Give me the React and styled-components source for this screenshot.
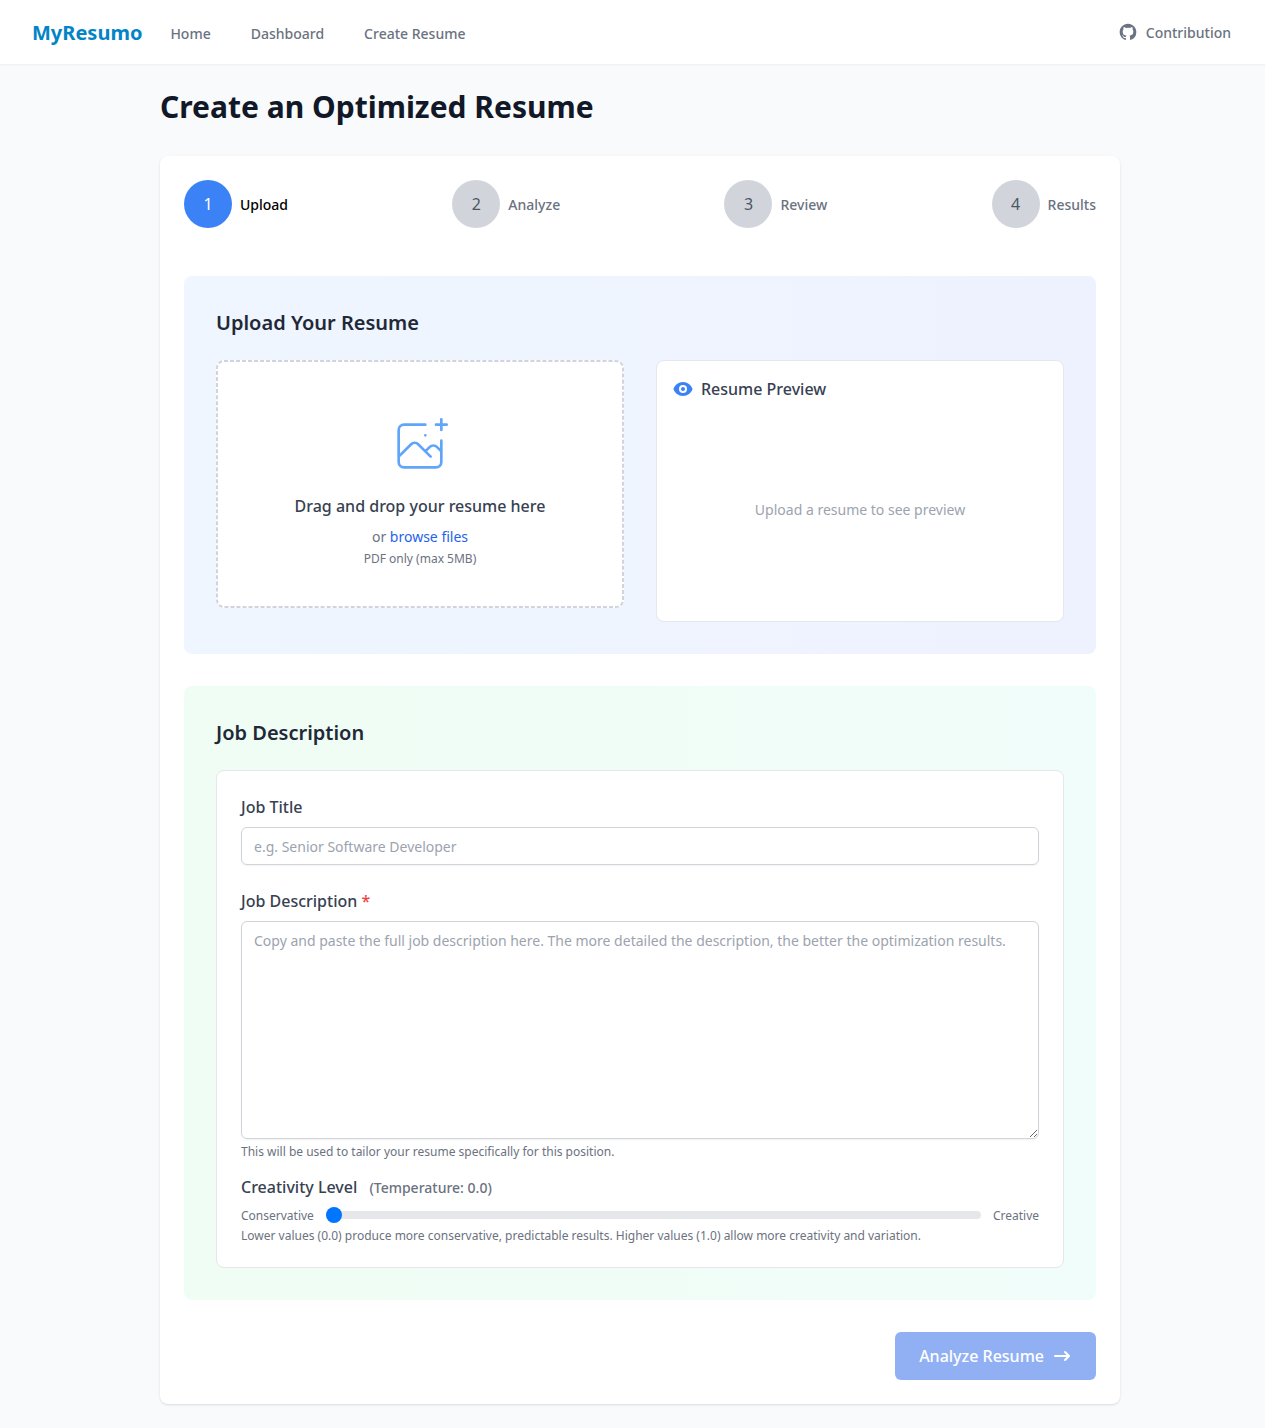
import React, { useState } from "react";
import styled, { createGlobalStyle } from "styled-components";

const fontStack = `"Noto Sans", sans-serif`;

const Global = createGlobalStyle`
  *, *::before, *::after { box-sizing: border-box; }
  html { background: #f9fafb; }
  body {
    margin: 0;
    overflow: hidden;
    background: #f9fafb;
    font-family: ${fontStack};
    font-size: 16px;
    line-height: 24px;
    color: #000;
  }
  h1, h2, h3, p { margin: 0; }
  svg { display: block; flex-shrink: 0; }
`;

const Page = styled.div`
  width: 1280px;
  min-height: 1428px;
  background: #f9fafb;
`;

const Nav = styled.nav`
  display: flex;
  justify-content: space-between;
  height: 64px;
  padding: 0 49px 0 32px;
  background: #fff;
  box-shadow: 0 1px 2px 0 rgba(0, 0, 0, 0.05);
`;

const NavGroup = styled.div`
  display: flex;
  align-items: center;
`;

const Brand = styled.a`
  margin-right: 28px;
  padding-top: 2px;
  font-size: 20px;
  line-height: 28px;
  font-weight: 700;
  color: #0284c7;
`;

const NavLinks = styled.div`
  display: flex;
  gap: 40px;
  padding-top: 3px;
`;

const NavLink = styled.a`
  display: flex;
  align-items: center;
  gap: 8px;
  font-size: 14px;
  line-height: 20px;
  font-weight: 500;
  color: #6b7280;
`;

const NavLinkText = styled.span`
  padding-top: 2px;
`;

const Main = styled.main`
  width: 960px;
  margin: 0 auto;
  padding: 25px 0 24px;
`;

const Title = styled.h1`
  margin-bottom: 31px;
  font-size: 30px;
  line-height: 36px;
  font-weight: 700;
  color: #111827;
`;

const Card = styled.div`
  padding: 24px;
  border-radius: 8px;
  background: #fff;
  box-shadow: 0 1px 3px 0 rgba(0, 0, 0, 0.1), 0 1px 2px -1px rgba(0, 0, 0, 0.1);
`;

const Steps = styled.div`
  display: flex;
  justify-content: space-between;
  margin-bottom: 48px;
`;

const Step = styled.div`
  display: flex;
  align-items: center;
  gap: 8px;
`;

const StepCircle = styled.div`
  display: flex;
  align-items: center;
  justify-content: center;
  width: 48px;
  height: 48px;
  border-radius: 50%;
  background: ${(p) => (p.$active ? "#3b82f6" : "#d1d5db")};
  color: ${(p) => (p.$active ? "#fff" : "#4b5563")};
`;

const StepLabel = styled.span`
  padding-top: 2px;
  font-size: 14px;
  line-height: 20px;
  font-weight: 500;
  color: ${(p) => (p.$active ? "#000" : "#6b7280")};
`;

const Section = styled.section`
  margin-bottom: 32px;
  padding: 32px;
  border-radius: 8px;
  background: linear-gradient(to right, ${(p) => p.$from}, ${(p) => p.$to});
`;

const SectionTitle = styled.h2`
  margin-bottom: 23px;
  padding-top: 1px;
  font-size: 20px;
  line-height: 28px;
  font-weight: 600;
  color: #1f2937;
`;

const Columns = styled.div`
  display: grid;
  grid-template-columns: 1fr 1fr;
  align-items: start;
  gap: 32px;
`;

const DropZone = styled.div`
  position: relative;
  display: flex;
  flex-direction: column;
  align-items: center;
  height: 248px;
  padding: 54px 34px 0;
  border-radius: 8px;
  background: #fff;
`;

const DashedOutline = styled.svg`
  position: absolute;
  inset: 0;
  width: 100%;
  height: 100%;
  pointer-events: none;
`;

const DropTitle = styled.p`
  margin: 16px 0 9px;
  font-weight: 500;
  color: #374151;
`;

const DropText = styled.p`
  margin-bottom: -1px;
  font-size: 14px;
  line-height: 20px;
  color: #6b7280;
`;

const Browse = styled.span`
  color: #2563eb;
`;

const Hint = styled.p`
  margin: 5px 0 -1px;
  font-size: 12px;
  line-height: 16px;
  color: #6b7280;
`;

const Preview = styled.div`
  padding: 16px;
  border: 1px solid #e5e7eb;
  border-radius: 8px;
  background: #fff;
`;

const PreviewTitle = styled.h3`
  display: flex;
  align-items: center;
  gap: 8px;
  margin-bottom: 12px;
  font-size: 16px;
  font-weight: 500;
  color: #374151;
`;

const PreviewBody = styled.div`
  display: flex;
  align-items: center;
  justify-content: center;
  height: 192px;
  padding-top: 2px;
  font-size: 14px;
  line-height: 20px;
  color: #9ca3af;
`;

const FormCard = styled.div`
  padding: 24px;
  border: 1px solid #e5e7eb;
  border-radius: 8px;
  background: #fff;
`;

const Field = styled.div`
  display: flex;
  flex-direction: column;
  margin-bottom: ${(p) => p.$gap || 0}px;
`;

const Label = styled.label`
  display: block;
  margin-bottom: 8px;
  font-weight: 500;
  color: #374151;
`;

const Required = styled.span`
  color: #ef4444;
`;

const Temperature = styled.span`
  margin-left: 8px;
  font-size: 14px;
  line-height: 20px;
  color: #6b7280;
`;

const Input = styled.input`
  display: block;
  width: 100%;
  height: 38px;
  padding: 8px 12px;
  border: 1px solid #d1d5db;
  border-radius: 6px;
  background: #fff;
  box-shadow: 0 1px 2px 0 rgba(0, 0, 0, 0.05);
  font: 14px/20px ${fontStack};
  color: #111827;

  &::placeholder {
    color: #9ca3af;
    opacity: 1;
  }
`;

const TextArea = styled(Input).attrs({ as: "textarea" })`
  height: 218px;
  padding-top: 9px;
`;

const SliderRow = styled.div`
  display: flex;
  align-items: center;
  gap: 12px;
  height: 16px;
`;

const SliderLabel = styled.span`
  padding-top: 2px;
  font-size: 12px;
  line-height: 16px;
  color: #6b7280;
`;

const Slider = styled.input`
  flex: 1;
  min-width: 0;
  height: 8px;
  margin: 0;
  appearance: none;
  border-radius: 8px;
  background: #e5e7eb;

  &::-webkit-slider-thumb {
    appearance: none;
    width: 16px;
    height: 16px;
    border-radius: 50%;
    background: #0075ff;
  }
`;

const Actions = styled.div`
  display: flex;
  justify-content: flex-end;
`;

const SubmitButton = styled.button`
  display: flex;
  align-items: center;
  gap: 8px;
  padding: 12px 24px;
  border: 0;
  border-radius: 6px;
  background: #2563eb;
  font: 500 16px/24px ${fontStack};
  color: #fff;
  opacity: 0.5;
`;

const GithubIcon = () => (
  <svg width="20" height="20" viewBox="0 0 24 24" fill="currentColor">
    <path
      fillRule="evenodd"
      clipRule="evenodd"
      d="M12 2C6.477 2 2 6.484 2 12.017c0 4.425 2.865 8.18 6.839 9.504.5.092.682-.217.682-.483 0-.237-.008-.868-.013-1.703-2.782.605-3.369-1.343-3.369-1.343-.454-1.158-1.11-1.466-1.11-1.466-.908-.62.069-.608.069-.608 1.003.07 1.531 1.032 1.531 1.032.892 1.53 2.341 1.088 2.91.832.092-.647.35-1.088.636-1.338-2.22-.253-4.555-1.113-4.555-4.951 0-1.093.39-1.988 1.029-2.688-.103-.253-.446-1.272.098-2.65 0 0 .84-.27 2.75 1.026A9.564 9.564 0 0112 6.844c.85.004 1.705.115 2.504.337 1.909-1.296 2.747-1.027 2.747-1.027.546 1.379.202 2.398.1 2.651.64.7 1.028 1.595 1.028 2.688 0 3.848-2.339 4.695-4.566 4.943.359.309.678.92.678 1.855 0 1.338-.012 2.419-.012 2.747 0 .268.18.58.688.482A10.019 10.019 0 0022 12.017C22 6.484 17.522 2 12 2z"
    />
  </svg>
);

const UploadIcon = () => (
  <svg width="64" height="64" viewBox="0 0 48 48" fill="none" stroke="#60a5fa" strokeWidth="2" strokeLinecap="round" strokeLinejoin="round">
    <path d="M28 8H12a4 4 0 00-4 4v20m32-12v8m0 0v8a4 4 0 01-4 4H12a4 4 0 01-4-4v-4m32-4l-3.172-3.172a4 4 0 00-5.656 0L28 28M8 32l9.172-9.172a4 4 0 015.656 0L28 28m0 0l4 4m4-24h8m-4-4v8m-12 4h.02" />
  </svg>
);

const EyeIcon = () => (
  <svg width="20" height="20" viewBox="0 0 20 20" fill="#3b82f6">
    <path d="M10 12a2 2 0 100-4 2 2 0 000 4z" />
    <path
      fillRule="evenodd"
      clipRule="evenodd"
      d="M.458 10C1.732 5.943 5.522 3 10 3s8.268 2.943 9.542 7c-1.274 4.057-5.064 7-9.542 7S1.732 14.057.458 10zM14 10a4 4 0 11-8 0 4 4 0 018 0z"
    />
  </svg>
);

const ArrowIcon = () => (
  <svg width="20" height="20" viewBox="0 0 20 20" fill="currentColor">
    <path
      fillRule="evenodd"
      clipRule="evenodd"
      d="M12.293 5.293a1 1 0 011.414 0l4 4a1 1 0 010 1.414l-4 4a1 1 0 01-1.414-1.414L14.586 11H3a1 1 0 110-2h11.586l-2.293-2.293a1 1 0 010-1.414z"
    />
  </svg>
);

const steps = ["Upload", "Analyze", "Review", "Results"];

export default function App() {
  const [temperature, setTemperature] = useState(0);

  return (
    <Page>
      <Global />
      <Nav>
        <NavGroup>
          <Brand>MyResumo</Brand>
          <NavLinks>
            <NavLink>Home</NavLink>
            <NavLink>Dashboard</NavLink>
            <NavLink>Create Resume</NavLink>
          </NavLinks>
        </NavGroup>
        <NavGroup>
          <NavLink>
            <GithubIcon />
            <NavLinkText>Contribution</NavLinkText>
          </NavLink>
        </NavGroup>
      </Nav>

      <Main>
        <Title>Create an Optimized Resume</Title>
        <Card>
          <Steps>
            {steps.map((name, i) => (
              <Step key={name}>
                <StepCircle $active={i === 0}>{i + 1}</StepCircle>
                <StepLabel $active={i === 0}>{name}</StepLabel>
              </Step>
            ))}
          </Steps>

          <Section $from="#eff6ff" $to="#eef2ff">
            <SectionTitle>Upload Your Resume</SectionTitle>
            <Columns>
              <DropZone>
                <DashedOutline viewBox="0 0 408 248" fill="none" stroke="#d1d5db" strokeWidth="2">
                  <rect x="1" y="1" width="406" height="246" rx="7" pathLength="1290" strokeDasharray="4 2" />
                </DashedOutline>
                <UploadIcon />
                <DropTitle>Drag and drop your resume here</DropTitle>
                <DropText>
                  or <Browse>browse files</Browse>
                </DropText>
                <Hint>PDF only (max 5MB)</Hint>
              </DropZone>
              <Preview>
                <PreviewTitle>
                  <EyeIcon />
                  Resume Preview
                </PreviewTitle>
                <PreviewBody>Upload a resume to see preview</PreviewBody>
              </Preview>
            </Columns>
          </Section>

          <Section $from="#f0fdf4" $to="#f0fdfa">
            <SectionTitle>Job Description</SectionTitle>
            <FormCard>
              <Field $gap={24}>
                <Label htmlFor="title">Job Title</Label>
                <Input id="title" type="text" placeholder="e.g. Senior Software Developer" />
              </Field>
              <Field $gap={16}>
                <Label htmlFor="description">
                  Job Description <Required>*</Required>
                </Label>
                <TextArea
                  id="description"
                  placeholder="Copy and paste the full job description here. The more detailed the description, the better the optimization results."
                />
                <Hint>This will be used to tailor your resume specifically for this position.</Hint>
              </Field>
              <Field>
                <Label htmlFor="temperature">
                  Creativity Level <Temperature>(Temperature: {temperature.toFixed(1)})</Temperature>
                </Label>
                <SliderRow>
                  <SliderLabel>Conservative</SliderLabel>
                  <Slider
                    id="temperature"
                    type="range"
                    min="0"
                    max="1"
                    step="0.1"
                    value={temperature}
                    onChange={(e) => setTemperature(Number(e.target.value))}
                  />
                  <SliderLabel>Creative</SliderLabel>
                </SliderRow>
                <Hint>
                  Lower values (0.0) produce more conservative, predictable results. Higher values (1.0) allow more
                  creativity and variation.
                </Hint>
              </Field>
            </FormCard>
          </Section>

          <Actions>
            <SubmitButton type="button" disabled>
              Analyze Resume
              <ArrowIcon />
            </SubmitButton>
          </Actions>
        </Card>
      </Main>
    </Page>
  );
}
